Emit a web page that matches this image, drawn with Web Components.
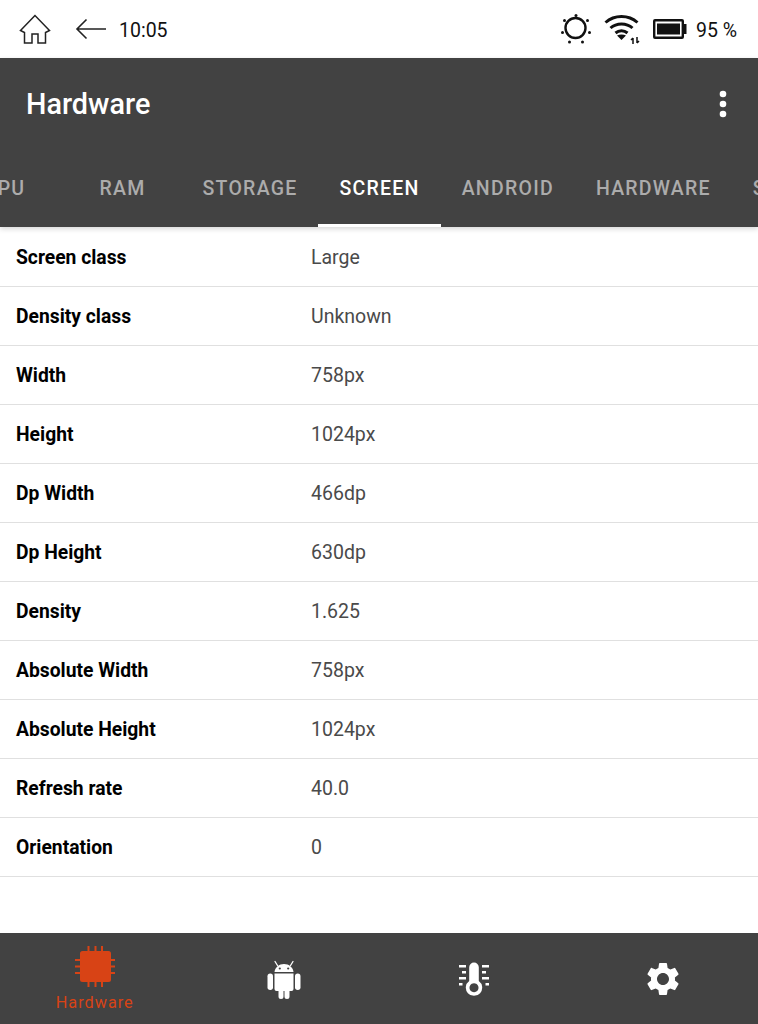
<!DOCTYPE html>
<html>
<head>
<meta charset="utf-8">
<title>Hardware</title>
<style>
  html, body { margin: 0; padding: 0; background: #fff; }
  body { width: 758px; height: 1024px; overflow: hidden; display: flex; flex-direction: column; font-family: Roboto, sans-serif; }
</style>
</head>
<body>
<status-bar></status-bar>
<app-header title="Hardware">
  <tab-item>CPU</tab-item>
  <tab-item>RAM</tab-item>
  <tab-item>STORAGE</tab-item>
  <tab-item active>SCREEN</tab-item>
  <tab-item>ANDROID</tab-item>
  <tab-item>HARDWARE</tab-item>
  <tab-item>SENSORS</tab-item>
</app-header>
<info-table>
  <info-row label="Screen class" value="Large"></info-row>
  <info-row label="Density class" value="Unknown"></info-row>
  <info-row label="Width" value="758px"></info-row>
  <info-row label="Height" value="1024px"></info-row>
  <info-row label="Dp Width" value="466dp"></info-row>
  <info-row label="Dp Height" value="630dp"></info-row>
  <info-row label="Density" value="1.625"></info-row>
  <info-row label="Absolute Width" value="758px"></info-row>
  <info-row label="Absolute Height" value="1024px"></info-row>
  <info-row label="Refresh rate" value="40.0"></info-row>
  <info-row label="Orientation" value="0"></info-row>
</info-table>
<bottom-nav>
  <nav-item icon="chip" label="Hardware" active></nav-item>
  <nav-item icon="android"></nav-item>
  <nav-item icon="thermo"></nav-item>
  <nav-item icon="gear"></nav-item>
</bottom-nav>

<script>
class StatusBar extends HTMLElement {
  constructor() {
    super();
    this.attachShadow({ mode: "open" });
  }

  connectedCallback() {
    this.shadowRoot.innerHTML = `
      <style>
        :host {
          display: flex;
          align-items: center;
          height: 58px;
          flex: none;
          padding: 0 21px 0 18px;
          background: #fff;
          color: #111;
          font-family: Roboto, sans-serif;
          font-size: 19.500px;
        }
        svg { display: block; flex: none; }
        .home { margin-right: 23px; }
        .back { margin-right: 13px; }
        .time { margin-top: 2px; }
        .spacer { flex: 1; }
        .sun { margin-right: 13px; }
        .wifi { margin-right: 13px; }
        .battery { margin-right: 9px; }
        .pct { margin-top: 2px; }
      </style>
      <svg class="home" width="34" height="34" viewBox="0 0 34 34" fill="none" stroke="#222" stroke-width="1.5" stroke-linejoin="miter">
        <path d="M17 3.500 L2.500 18.500 L6.500 20.500 V31 H14 V22 H20 V31 H27.500 V20.500 L31.500 18.500 Z"/>
      </svg>
      <svg class="back" width="31" height="24" viewBox="0 0 31 24" fill="none" stroke="#222" stroke-width="1.6">
        <path d="M31 12 H2 M11.500 2.500 L2 12 L11.500 21.500"/>
      </svg>
      <span class="time">10:05</span>
      <span class="spacer"></span>
      <svg class="sun" width="30" height="30" viewBox="0 0 30 30">
        <circle cx="14.500" cy="14" r="10" fill="none" stroke="#111" stroke-width="2.400"/>
        <g fill="#111">
          <circle cx="15" cy="1.500" r="1.500"/><circle cx="26.500" cy="6.500" r="1.500"/><circle cx="28.500" cy="18.500" r="1.500"/>
          <circle cx="21.500" cy="28" r="1.500"/><circle cx="8.500" cy="28" r="1.500"/><circle cx="1.500" cy="18.500" r="1.500"/><circle cx="3.500" cy="6.500" r="1.500"/>
        </g>
      </svg>
      <svg class="wifi" width="36" height="32" viewBox="0 0 36 32" fill="none" stroke="#111" stroke-width="3">
        <path d="M1.500 9.500 C10.500 1.500 24.500 1.500 33.500 9.500"/>
        <path d="M6.500 15 C12.500 9.500 22.500 9.500 28.500 15"/>
        <path d="M11.500 20 C15 17 20 17 23.500 20"/>
        <path d="M17.500 27 L13 22.500 C15.500 21 19.500 21 22 22.500 Z" fill="#111" stroke="none"/>
        <path d="M29 31 V25 M27 27 L29 25 M33 24 V30 M35 28 L33 30" stroke-width="1.500"/>
      </svg>
      <svg class="battery" width="34" height="20" viewBox="0 0 34 20">
        <rect x="1.200" y="1.200" width="28.600" height="17.600" rx="0.800" fill="none" stroke="#111" stroke-width="2.400"/>
        <rect x="4" y="4.500" width="23" height="11" fill="#111"/>
        <rect x="30" y="5" width="3.500" height="10" fill="#111"/>
      </svg>
      <span class="pct">95 %</span>
    `;
  }
}
customElements.define("status-bar", StatusBar);

class AppHeader extends HTMLElement {
  constructor() {
    super();
    this.attachShadow({ mode: "open" });
  }

  connectedCallback() {
    this.shadowRoot.innerHTML = `
      <style>
        :host {
          display: block;
          flex: none;
          height: 169px;
          background: #424242;
          box-shadow: 0 2px 5px rgba(0, 0, 0, 0.16);
          position: relative;
          overflow: hidden;
          color: #fff;
          font-family: Roboto, sans-serif;
        }
        .top {
          display: flex;
          align-items: center;
          justify-content: space-between;
          height: 92px;
          padding: 0 31px 0 26px;
          box-sizing: border-box;
        }
        .title { font-size: 28.800px; font-weight: 500; }
        .more { display: block; }
        .tabs {
          display: flex;
          height: 77px;
          margin-left: -54.500px;
          width: max-content;
        }
      </style>
      <div class="top">
        <span class="title">${this.getAttribute("title")}</span>
        <svg class="more" width="8" height="28" viewBox="0 0 8 28" fill="#fff">
          <circle cx="4" cy="4" r="3.300"/><circle cx="4" cy="14" r="3.300"/><circle cx="4" cy="24" r="3.300"/>
        </svg>
      </div>
      <div class="tabs"><slot></slot></div>
    `;
  }
}
customElements.define("app-header", AppHeader);

class TabItem extends HTMLElement {
  constructor() {
    super();
    this.attachShadow({ mode: "open" });
  }

  connectedCallback() {
    this.shadowRoot.innerHTML = `
      <style>
        :host {
          display: flex;
          align-items: center;
          justify-content: center;
          box-sizing: border-box;
          min-width: 118px;
          height: 77px;
          padding: 0 21px;
          position: relative;
          font-family: Roboto, sans-serif;
          font-size: 19.500px;
          font-weight: 500;
          letter-spacing: 1.250px;
          white-space: nowrap;
          color: rgba(255, 255, 255, 0.56);
        }
        :host([active]) { color: #fff; }
        :host([active])::after {
          content: "";
          position: absolute;
          left: 0;
          right: 0;
          bottom: 0;
          height: 3px;
          background: #fff;
        }
      </style>
      <span><slot></slot></span>
    `;
  }
}
customElements.define("tab-item", TabItem);

class InfoTable extends HTMLElement {
  constructor() {
    super();
    this.attachShadow({ mode: "open" });
  }

  connectedCallback() {
    this.shadowRoot.innerHTML = `
      <style>
        :host {
          display: block;
          flex: 1;
          min-height: 0;
          padding-top: 1px;
          background: #fff;
        }
      </style>
      <slot></slot>
    `;
  }
}
customElements.define("info-table", InfoTable);

class InfoRow extends HTMLElement {
  constructor() {
    super();
    this.attachShadow({ mode: "open" });
  }

  connectedCallback() {
    this.shadowRoot.innerHTML = `
      <style>
        :host {
          display: grid;
          grid-template-columns: 295px 1fr;
          align-items: center;
          box-sizing: border-box;
          height: 59px;
          padding: 0 16px;
          border-bottom: 1px solid #e0e0e0;
          font-family: Roboto, sans-serif;
          font-size: 19.300px;
        }
        .label { font-weight: 700; color: #000; }
        .value { color: #4a4a4a; font-size: 19.500px; }
      </style>
      <span class="label">${this.getAttribute("label")}</span>
      <span class="value">${this.getAttribute("value")}</span>
    `;
  }
}
customElements.define("info-row", InfoRow);

class BottomNav extends HTMLElement {
  constructor() {
    super();
    this.attachShadow({ mode: "open" });
  }

  connectedCallback() {
    this.shadowRoot.innerHTML = `
      <style>
        :host {
          display: grid;
          grid-template-columns: repeat(4, 1fr);
          flex: none;
          height: 91px;
          background: #424242;
        }
      </style>
      <slot></slot>
    `;
  }
}
customElements.define("bottom-nav", BottomNav);

const NAV_ICONS = {
  chip: `<svg width="40" height="41" viewBox="0 0 40 41" fill="currentColor">
      <rect x="5" y="5" width="31" height="31" rx="2.500"/>
      <path d="M12.500 0h2v5h-2zM19.500 0h2v5h-2zM26 0h2v5h-2zM12.500 36h2v5h-2zM19.500 36h2v5h-2zM26 36h2v5h-2zM0 13h5v2H0zM0 19.500h5v2H0zM0 26h5v2H0zM36 13h4v2h-4zM36 19.500h4v2h-4zM36 26h4v2h-4z"/>
    </svg>`,
  android: `<svg width="34" height="40" viewBox="0 0 34 40" fill="currentColor">
      <path d="M7.500 13 C8 8.500 12 5 17 5 C22 5 26 8.500 26.500 13 Z"/>
      <path d="M10.500 6.500 L8 2.500 M23.500 6.500 L26 2.500" stroke="currentColor" stroke-width="1.300" stroke-linecap="round"/>
      <circle cx="12.800" cy="9.500" r="1.100" fill="#424242"/><circle cx="21.200" cy="9.500" r="1.100" fill="#424242"/>
      <path d="M7.500 14.500 H26.500 V30 a2 2 0 0 1 -2 2 H22.500 V37.500 a2.500 2.500 0 0 1 -5 0 V32 H16.500 V37.500 a2.500 2.500 0 0 1 -5 0 V32 H9.500 a2 2 0 0 1 -2 -2 Z"/>
      <rect x="0.500" y="14.500" width="5.500" height="16.500" rx="2.700"/>
      <rect x="28" y="14.500" width="5.500" height="16.500" rx="2.700"/>
    </svg>`,
  thermo: `<svg width="30" height="34" viewBox="0 0 30 34" fill="currentColor">
      <path d="M15 0.500 a4.800 4.800 0 0 1 4.800 4.800 V19 a8.200 8.200 0 1 1 -9.600 0 V5.300 A4.800 4.800 0 0 1 15 0.500 Z M15 21.150 a4.500 4.500 0 1 0 0.010 0 Z" fill-rule="evenodd"/>
      <path d="M0 3h7v2.500H0zM23 3h7v2.500h-7zM3 9h4v2.500H3zM23 9h4v2.500h-4zM0 15h7v2.500H0zM23 15h7v2.500h-7zM0 21h3.500v2.500H0zM26.500 21h3.500v2.500h-3.500z"/>
    </svg>`,
  gear: `<svg width="40" height="40" viewBox="0 0 24 24" fill="currentColor">
      <path d="M19.140 12.940c.04-.3.060-.61.060-.94 0-.32-.020-.64-.070-.94l2.030-1.580a.49.49 0 0 0 .12-.61l-1.920-3.320a.488.488 0 0 0-.59-.22l-2.390.96c-.5-.38-1.030-.7-1.620-.94l-.36-2.540a.484.484 0 0 0-.48-.41h-3.840c-.24 0-.43.170-.47.410l-.36 2.540c-.59.240-1.130.57-1.620.94l-2.390-.96c-.22-.08-.47 0-.59.220L2.740 8.870c-.12.210-.08.470.12.610l2.030 1.580c-.05.300-.09.630-.09.940s.020.640.070.940l-2.030 1.580a.49.49 0 0 0-.12.610l1.920 3.320c.12.220.37.290.59.220l2.390-.96c.5.380 1.030.7 1.620.94l.36 2.540c.05.240.24.410.48.410h3.840c.24 0 .44-.17.470-.41l.36-2.540c.59-.24 1.130-.56 1.620-.94l2.390.96c.22.080.47 0 .59-.22l1.920-3.320c.12-.22.070-.47-.12-.61l-2.010-1.580zM12 15.600c-1.980 0-3.600-1.620-3.600-3.600s1.620-3.600 3.600-3.600 3.600 1.620 3.600 3.600-1.620 3.600-3.600 3.600z"/>
    </svg>`,
};

class NavItem extends HTMLElement {
  constructor() {
    super();
    this.attachShadow({ mode: "open" });
  }

  connectedCallback() {
    const label = this.getAttribute("label");
    this.shadowRoot.innerHTML = `
      <style>
        :host {
          display: flex;
          flex-direction: column;
          align-items: center;
          justify-content: center;
          gap: 6px;
          color: #fff;
          font-family: Roboto, sans-serif;
          font-size: 16.250px;
          letter-spacing: 1px;
        }
        :host([active]) {
          justify-content: flex-start;
          padding-top: 13px;
          color: #d84315;
        }
        svg { display: block; }
      </style>
      ${NAV_ICONS[this.getAttribute("icon")]}
      ${label ? `<span>${label}</span>` : ""}
    `;
  }
}
customElements.define("nav-item", NavItem);
</script>
</body>
</html>
